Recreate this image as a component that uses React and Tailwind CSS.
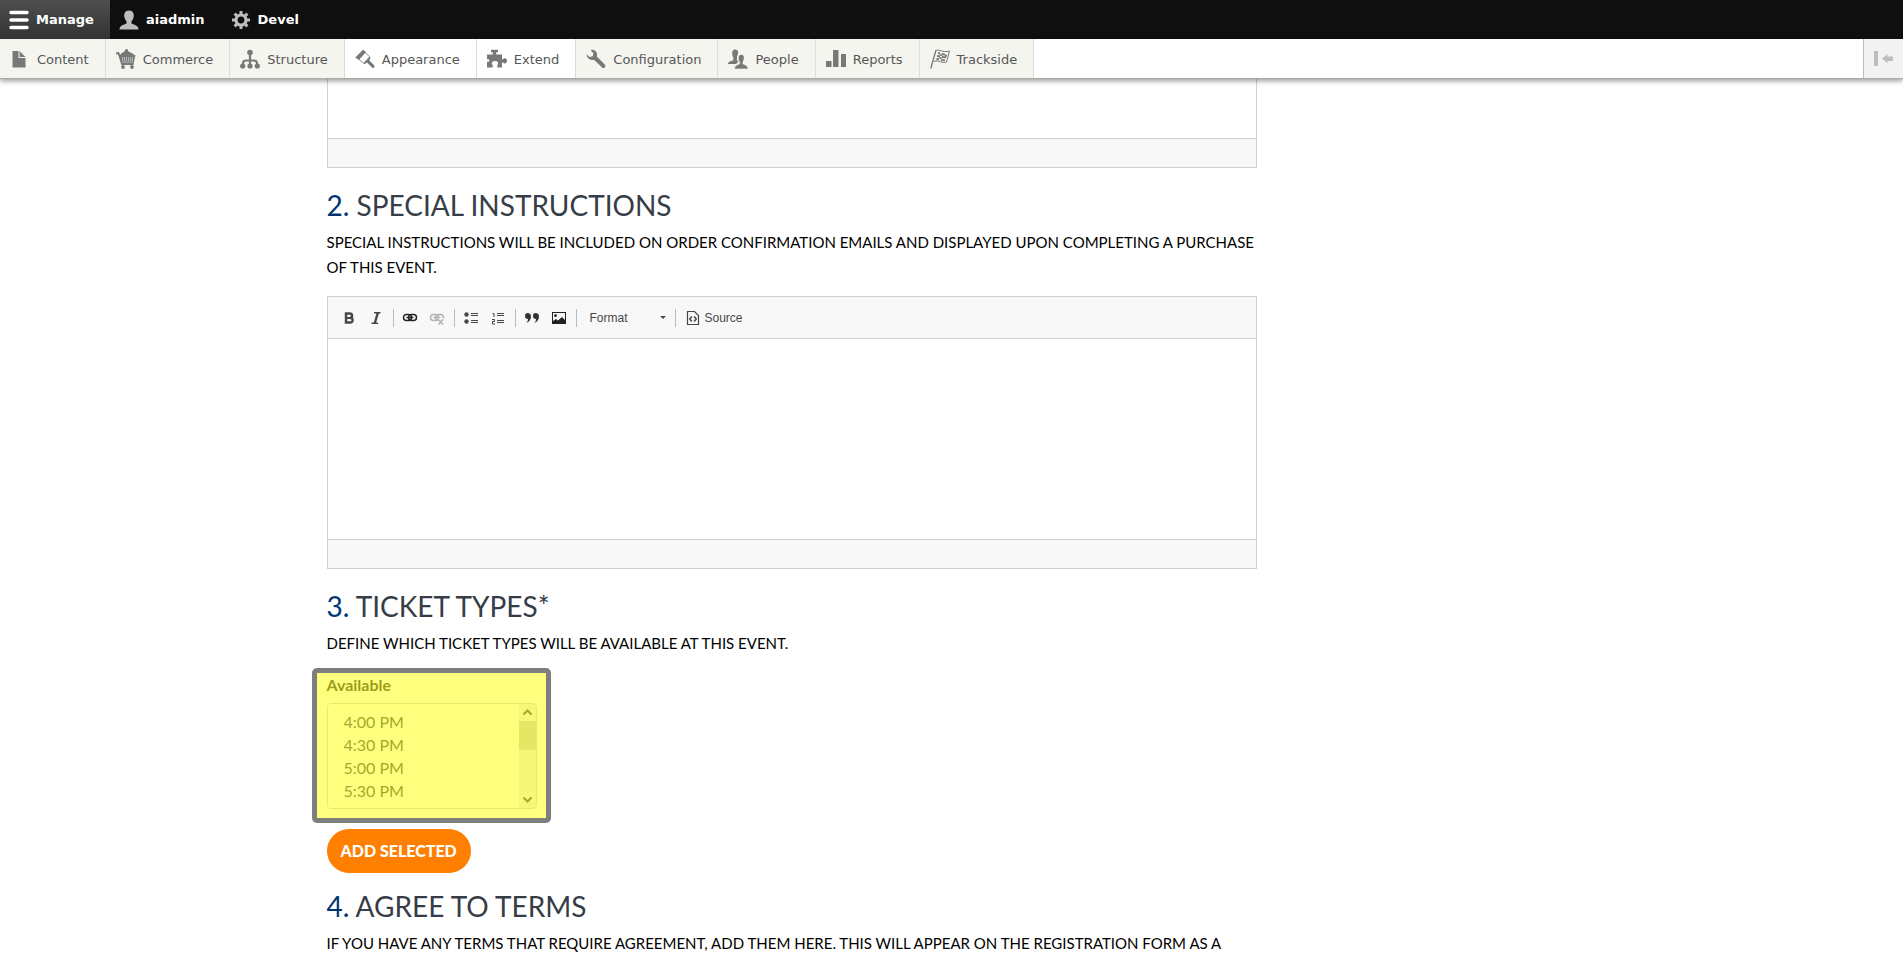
const trayItems = [
  { label: "Content", icon: "content" },
  { label: "Commerce", icon: "commerce" },
  { label: "Structure", icon: "structure" },
  { label: "Appearance", icon: "appearance", light: true },
  { label: "Extend", icon: "extend", light: true },
  { label: "Configuration", icon: "configuration" },
  { label: "People", icon: "people" },
  { label: "Reports", icon: "reports" },
  { label: "Trackside", icon: "trackside" },
];

const ticketTypes = ["4:00 PM", "4:30 PM", "5:00 PM", "5:30 PM"];

// TRAY ICONS - all on a 20x20 grid
const trayIcons = {
  content: (
    <>
      <path d="M2.500 2h6v7h7v9.500h-13z" />
      <path d="M9.500 2l6 6h-6z" />
    </>
  ),
  commerce: (
    <>
      <path d="M4 6.500C4.500 4 7 3.500 8.500 2.500 9 .5 10 0 10.500 0s1.500.5 2 2.500c1.500 1 5 1.500 6 4z" />
      <path d="M0 4.500l2.500-.5L6 15h11.500" fill="none" stroke="currentColor" strokeWidth="1.800" />
      <path d="M3.500 6h16l-2 9h-12z" />
      <path d="M6 9h12M6 11h11M6.500 13h10.500" stroke="#f5f5f0" strokeDasharray="1 1" fill="none" />
      <circle cx="7" cy="18" r="1.900" />
      <circle cx="16" cy="18" r="1.900" />
    </>
  ),
  structure: (
    <>
      <path d="M10 3v14M3 17v-2.500q0-3 3-3h8q3 0 3 3V17" fill="none" stroke="currentColor" strokeWidth="2.200" />
      <circle cx="10" cy="3.500" r="2.800" />
      <circle cx="2.700" cy="17" r="2.600" />
      <circle cx="10" cy="17" r="2.600" />
      <circle cx="17.300" cy="17" r="2.600" />
    </>
  ),
  appearance: (
    <>
      <path d="M.3 8.500L8 .8l3 2.200-7.200 8z" />
      <path d="M10 3.200l4.600 4.600-5.800 6.400-5.300-4z" fill="none" stroke="currentColor" strokeWidth=".8" />
      <path d="M8.500 14.500l6.300-6.800.8 1.300-1.300 2.300 5 5.300c1 1.600-1 3.200-2.300 2l-5-5.200-2.500 1.900z" />
    </>
  ),
  extend: (
    <path d="M0 5.500h5.800V3.200H4V.8h7v2.400H9.200v2.300H15v4.800h1.200c.5-1.600 3.800-1.600 3.800 1.500s-3.300 3.200-3.800 1.600H15V18.500h-4.700v-2.200c2-2.500.2-4.300-2.300-4.300s-4.300 1.800-2.300 4.300v2.200H0v-5.800h1.500c1.300 0 1.300-2.500 0-2.500H0z" />
  ),
  configuration: (
    <path d="M5 .8c4-.8 7 2.700 5.800 6.700l8 8c1.800 1.900-.9 4.700-2.700 3L8 10.700C4.500 11.800.8 9.500.6 5.300L3.600 8l3.200-.8.6-3L5 1.600z" />
  ),
  people: (
    <>
      <path d="M7 .5c2.700 0 3.800 2.200 2.800 5L9 7.500v4l1.500 1-2.500 2.500H0c0-2.500 3-2.800 5.300-3.800V8.500C3.500 5 3.800.5 7 .5z" />
      <path d="M13.200 5.500c3 0 3.600 3 2.600 5.500l-.8 2v2c2.500 1 5 1.500 5 5H6.500c0-3.500 2.700-4 5-5v-2c-2-3.500-1.500-7.500 1.700-7.500z" stroke="#f5f5f0" strokeWidth=".6" />
    </>
  ),
  reports: <path d="M0 12h5.500v6H0zM7 1h5.500v17H7zM15 5h5v13h-5z" />,
  trackside: (
    <g fill="none" stroke="currentColor">
      <path d="M6 1L.8 19.500" strokeWidth="1.300" />
      <path d="M6 1.500c4-1.500 6 2.500 13.500.5L16.500 13c-5 2-7-2.500-12.500-.500" />
      <path d="M8 4l2 .4M12 5l3 .6M7 7l3 .3M12 8l4 .3M6.500 10l2.500.2M11 11l4 .3M10 5.500l2 1M9.500 8.500l2 1M15 6.500l2 .3" strokeWidth="1.800" />
    </g>
  ),
};

// EDITOR TOOLBAR ICONS - 16x16 grid
function BoldIcon() {
  return (
    <svg viewBox="0 0 16 16" className="w-4 h-4">
      <path d="M5 3.500h3.500c3.400 0 3.400 4 .5 4.300 3.500.2 3.600 4.700 0 4.700H5z" fill="none" stroke="#474747" strokeWidth="2.400" />
      <path d="M5 8h4" stroke="#474747" strokeWidth="2" />
    </svg>
  );
}

function ItalicIcon() {
  return (
    <svg viewBox="0 0 16 16" className="w-4 h-4" stroke="#474747" fill="none">
      <path d="M9.800 3L6.800 13" strokeWidth="2.400" />
      <path d="M6 2.800h6.500M3.500 13.200H10" strokeWidth="1.600" />
    </svg>
  );
}

function LinkIcon({ off }) {
  return (
    <svg viewBox="0 0 16 16" className="w-4 h-4" stroke={off ? "#b4b4b4" : "#222"} fill="none">
      <rect x="1.500" y="4.500" width="8" height="6" rx="3" strokeWidth="1.500" />
      <rect x="6.500" y="4.500" width="8" height="6" rx="3" strokeWidth="1.500" />
      <path d="M4.500 7.500h7" strokeWidth="1.400" />
      {off && (
        <>
          <path d="M9 8.500h7V15H9z" fill="#f8f8f8" stroke="none" />
          <path d="M9.500 9.500l4.500 5M14 9.500l-4.500 5" strokeWidth="1.700" />
        </>
      )}
    </svg>
  );
}

function BulletsIcon() {
  return (
    <svg viewBox="0 0 16 16" className="w-4 h-4" stroke="#474747">
      <circle cx="3.500" cy="4.500" r="2.200" fill="#474747" stroke="none" />
      <circle cx="3.500" cy="11.500" r="2.200" fill="#474747" stroke="none" />
      <path d="M8 3.500h7M8 5.500h7M8 10.500h7M8 12.500h7" />
    </svg>
  );
}

function NumbersIcon() {
  return (
    <svg viewBox="0 0 16 16" className="w-4 h-4" stroke="#474747" fill="none">
      <path d="M2.500 3.500h1.500V7M2 9.500h2.500v2h-2v2.500H5" />
      <path d="M7 3.500h7M7 5.500h7M7 10.500h7M7 12.500h7" />
    </svg>
  );
}

function QuoteIcon() {
  return (
    <svg viewBox="0 0 16 16" className="w-4 h-4" fill="#333">
      <path d="M3.500 3C6 3 7 4.500 7 6.500c0 3-2 5.500-4.500 6.500C3.500 11.500 4 10.500 4 9 2 9 1 7.800 1 6s1-3 2.500-3z" />
      <path d="M11.500 3C14 3 15 4.500 15 6.500c0 3-2 5.500-4.500 6.500 1-1.500 1.500-2.500 1.500-4-2 0-3-1.200-3-3s1-3 2.500-3z" />
    </svg>
  );
}

function ImageIcon() {
  return (
    <svg viewBox="0 0 16 16" className="w-4 h-4">
      <rect x="1.500" y="2.500" width="13" height="11" fill="none" stroke="#222" />
      <path d="M2 12.500V11l3-2 2 1.500L11 7l3 3v3H2z" fill="#222" />
      <circle cx="4.500" cy="5.500" r="1.500" fill="#333" />
    </svg>
  );
}

function SourceIcon() {
  return (
    <svg viewBox="0 0 16 16" className="w-4 h-4" fill="none" stroke="#474747">
      <path d="M2.500 1.500h7l4 4v9h-11z" strokeWidth="1.200" />
      <path d="M6.800 6.500L4.800 9l2 2.500M9.200 6.500l2 2.500-2 2.500" strokeWidth="1.500" />
    </svg>
  );
}

function ToolButton({ label, children }) {
  return (
    <button type="button" aria-label={label} className="w-[27px] h-7 flex items-center justify-center">
      {children}
    </button>
  );
}

function Separator() {
  return <span className="w-px h-[18px] mx-[3px] bg-[#bcbcbc]" />;
}

function EditorToolbar() {
  return (
    <div className="h-[42px] pl-2 flex items-center bg-[#f8f8f8] border-b border-[#d1d1d1] font-['Liberation_Sans',Arial,sans-serif] text-xs text-[#484848]">
      <ToolButton label="Bold"><BoldIcon /></ToolButton>
      <ToolButton label="Italic"><ItalicIcon /></ToolButton>
      <Separator />
      <ToolButton label="Link"><LinkIcon /></ToolButton>
      <ToolButton label="Unlink"><LinkIcon off /></ToolButton>
      <Separator />
      <ToolButton label="Bulleted list"><BulletsIcon /></ToolButton>
      <ToolButton label="Numbered list"><NumbersIcon /></ToolButton>
      <Separator />
      <ToolButton label="Block quote"><QuoteIcon /></ToolButton>
      <ToolButton label="Image"><ImageIcon /></ToolButton>
      <Separator />
      <button type="button" className="w-[92px] pl-2.5 pr-1.5 flex items-center justify-between">
        Format
        <svg viewBox="0 0 6 3" className="w-1.5 h-[3px]" fill="#474747">
          <path d="M0 0h6L3 3z" />
        </svg>
      </button>
      <Separator />
      <button type="button" className="pl-1.5 flex items-center gap-1">
        <SourceIcon />
        Source
      </button>
    </div>
  );
}

function Heading({ number, children }) {
  return (
    <h2 className="text-[28px] leading-[34px] mb-2 text-[#373d47]">
      <span className="text-[#003473]">{number}.</span> {children}
    </h2>
  );
}

function AdminToolbar() {
  return (
    <header className="relative z-10 font-['DejaVu_Sans',Verdana,sans-serif] text-[13px]">
      <nav className="h-[39px] flex bg-[#0f0f0f] text-white font-bold">
        <a href="#manage" className="w-[110px] pl-[9px] flex items-center gap-[7px] bg-gradient-to-b from-[#4f4f4f] to-[#333]">
          <svg viewBox="0 0 20 20" className="w-5 h-5" stroke="#fff" strokeWidth="3.500" strokeLinecap="round">
            <path d="M2 2.500h16M2 10h16M2 17.500h16" />
          </svg>
          Manage
        </a>
        <a href="#user" className="pl-[9px] flex items-center gap-[7px]">
          <svg viewBox="0 0 20 20" className="w-5 h-5" fill="#bebebe">
            <path d="M10 .5c4 0 5.500 3.500 4.500 7-.5 2-1.500 3-2 4v2c2.500 1.500 7 1.500 7 6H.5c0-4.500 4.500-4.500 7-6v-2c-.5-1-1.500-2-2-4-1-3.500.5-7 4.500-7z" />
          </svg>
          aiadmin
        </a>
        <a href="#devel" className="pl-[26px] flex items-center gap-[7px]">
          <svg viewBox="0 0 20 20" className="w-5 h-5" fill="none" stroke="#bebebe">
            <circle cx="10" cy="10" r="5" strokeWidth="3.200" />
            <path d="M10 1v3.500M10 15.500V19M1 10h3.500M15.500 10H19M3.600 3.600L6 6M14 14l2.400 2.400M3.600 16.400L6 14M14 6l2.400-2.400" strokeWidth="3" />
          </svg>
          Devel
        </a>
      </nav>
      <nav className="h-10 flex bg-white border-b border-[#aaa] shadow-[0_2px_5px_rgba(0,0,0,0.4)] text-[#565656]">
        {trayItems.map((item) => (
          <a
            key={item.label}
            href={`#${item.icon}`}
            className={`pl-2.5 pr-4 flex items-center gap-[7px] border-r border-[#ddd] ${item.light ? "bg-white" : "bg-[#f5f5f0]"}`}
          >
            <svg viewBox="0 0 20 20" className="w-5 h-5 text-[#787878]" fill="currentColor">
              {trayIcons[item.icon]}
            </svg>
            <span className="pt-0.5">{item.label}</span>
          </a>
        ))}
        <button type="button" aria-label="Vertical orientation" className="ml-auto w-10 flex items-center justify-center bg-[#f3f3f3] border-l border-[#bbb]">
          <svg viewBox="0 0 20 16" className="w-5 h-4" fill="#bebebe">
            <path d="M0 0h4v15H0zM8 7.500L13.500 3v2.500H19v4.500h-5.500v2.500z" />
          </svg>
        </button>
      </nav>
    </header>
  );
}

export default function App() {
  return (
    <div className="bg-white font-[Lato,sans-serif] text-[15px] leading-[25px] text-black">
      <AdminToolbar />

      <main className="max-w-[1250px] mx-auto">
        <div className="w-full max-w-[930px]">
          {/* FIRST EDITOR */}
          <div className="border border-t-0 border-[#d1d1d1] mb-5">
            <textarea aria-label="Description" className="block w-full h-[59px] resize-none outline-none" />
            <div className="h-[29px] bg-[#f8f8f8] border-t border-[#d1d1d1]" />
          </div>

          {/* SPECIAL INSTRUCTIONS */}
          <section className="mb-5">
            <Heading number="2">SPECIAL INSTRUCTIONS</Heading>
            <p className="mb-4">
              SPECIAL INSTRUCTIONS WILL BE INCLUDED ON ORDER CONFIRMATION EMAILS AND DISPLAYED UPON COMPLETING A PURCHASE OF THIS EVENT.
            </p>
            <div className="border border-[#d1d1d1]">
              <EditorToolbar />
              <textarea aria-label="Special instructions" className="block w-full h-[200px] resize-none outline-none" />
              <div className="h-[29px] bg-[#f8f8f8] border-t border-[#d1d1d1]" />
            </div>
          </section>

          {/* TICKET TYPES */}
          <section className="mb-4">
            <Heading number="3">TICKET TYPES*</Heading>
            <p className="mb-4">DEFINE WHICH TICKET TYPES WILL BE AVAILABLE AT THIS EVENT.</p>
            <div className="relative w-[210px] mb-5">
              <label htmlFor="available" className="block mb-1.5 text-base leading-[25px] font-bold text-[#373a3c]">
                Available
              </label>
              <div className="h-[106px] flex border border-[#ced4da] rounded-sm overflow-hidden">
                <select id="available" multiple size={4} className="flex-1 overflow-hidden pt-2 pl-3.5 bg-white text-base text-[#495057] outline-none">
                  {ticketTypes.map((time) => (
                    <option key={time} className="h-[23px] leading-[23px] p-0 pl-0.5 min-h-0">
                      {time}
                    </option>
                  ))}
                </select>
                <div className="w-[17px] flex flex-col items-center bg-[#f0f0f0]">
                  <svg viewBox="0 0 17 17" className="w-[17px] h-[17px]" fill="none" stroke="#505050" strokeWidth="2">
                    <path d="M4.500 10.500l4-4 4 4" />
                  </svg>
                  <div className="w-full h-[29px] bg-[#cdcdcd]" />
                  <svg viewBox="0 0 17 17" className="w-[17px] h-[17px] mt-auto" fill="none" stroke="#505050" strokeWidth="2">
                    <path d="M4.500 6.500l4 4 4-4" />
                  </svg>
                </div>
              </div>
              {/* highlight */}
              <div className="absolute -top-1 -bottom-3.5 -left-[15px] -right-3.5 border-[5px] border-black bg-[#ff0] bg-clip-padding rounded-[5px] opacity-50 pointer-events-none" />
            </div>
            <button type="button" className="h-11 px-3.5 rounded-full bg-[#ff7f00] text-white text-base font-black">
              ADD SELECTED
            </button>
          </section>

          {/* TERMS */}
          <section>
            <Heading number="4">AGREE TO TERMS</Heading>
            <p>
              IF YOU HAVE ANY TERMS THAT REQUIRE AGREEMENT, ADD THEM HERE. THIS WILL APPEAR ON THE REGISTRATION FORM AS A
            </p>
          </section>
        </div>
      </main>
    </div>
  );
}
